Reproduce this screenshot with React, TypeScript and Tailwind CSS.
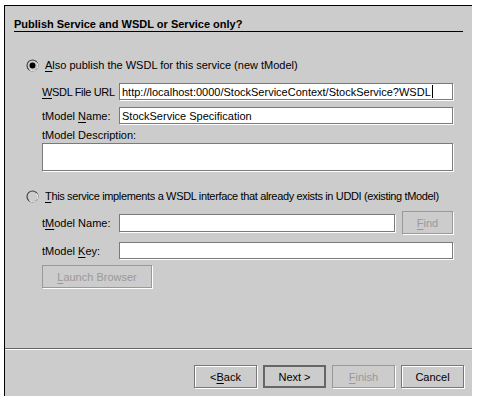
import React from "react";

// Swing/Metal style wizard page: publish a service with or without WSDL.

function Radio({ checked }: { checked?: boolean }) {
  return (
    <svg width="13" height="13" viewBox="0 0 13 13" className="shrink-0">
      <circle cx="6.5" cy="6.5" r="5.5" fill="#cccccc" stroke="#3c3c3c" strokeWidth="1.1" />
      <path d="M3.4 10.4 A4.5 4.5 0 0 0 10.4 3.4" fill="none" stroke="#ffffff" />
      {checked && <circle cx="6.5" cy="6.5" r="3" fill="#000000" />}
    </svg>
  );
}

function U({ children }: { children: React.ReactNode }) {
  return <span className="underline underline-offset-[2px]">{children}</span>;
}

function Field({ value, caret, className = "" }: { value?: string; caret?: boolean; className?: string }) {
  return (
    <div
      className={`h-[17px] bg-white border border-[#7a7a7a] shadow-[1px_1px_0_#ffffff] flex items-center pl-[2px] text-black whitespace-nowrap overflow-hidden ${className}`}
    >
      {value}
      {caret && <span className="inline-block w-px h-[13px] bg-black ml-px" />}
    </div>
  );
}

function Button({
  children,
  disabled,
  primary,
  className = "",
}: {
  children: React.ReactNode;
  disabled?: boolean;
  primary?: boolean;
  className?: string;
}) {
  const tone = disabled
    ? "border border-[#999999] text-[#999999] shadow-[1px_1px_0_#ffffff]"
    : primary
    ? "border-2 border-[#666666] text-black"
    : "border border-[#777777] text-black shadow-[inset_1px_1px_0_#ffffff,1px_1px_0_#ffffff]";
  return (
    <div className={`h-[23px] flex items-center justify-center bg-[#cccccc] whitespace-nowrap ${tone} ${className}`}>
      {children}
    </div>
  );
}

export default function App() {
  return (
    <div
      className="min-h-screen bg-white pt-[5px] pl-[4px] text-[11px] leading-[14px] text-black"
      style={{ fontFamily: '"Liberation Sans", Arial, sans-serif' }}
    >
      <div className="w-[468px] h-[391px] bg-[#cccccc] border-l border-t border-black flex flex-col">
        {/* Heading */}
        <div className="mx-[9px] mt-[11px] border-b border-black h-[15px]">
          <span className="font-bold">Publish Service and WSDL or Service only?</span>
        </div>

        {/* Option 1: new tModel */}
        <div className="flex items-center gap-[6px] pl-[21px] mt-[26px]">
          <Radio checked />
          <span className="whitespace-nowrap">
            <U>A</U>lso publish the WSDL for this service (new tModel)
          </span>
        </div>

        <div className="flex flex-col pl-[37px] pr-[19px]">
          <div className="flex items-center mt-[11px]">
            <span className="w-[77px] shrink-0 whitespace-nowrap tracking-[-0.35px]">
              <U>W</U>SDL File URL
            </span>
            <Field className="flex-1" value="http://localhost:0000/StockServiceContext/StockService?WSDL" caret />
          </div>
          <div className="flex items-center mt-[7px]">
            <span className="w-[77px] shrink-0 whitespace-nowrap">
              tModel <U>N</U>ame:
            </span>
            <Field className="flex-1" value="StockService Specification" />
          </div>
          <span className="mt-[4px] whitespace-nowrap">tModel Description:</span>
          <div className="h-[28px] bg-white border border-[#7a7a7a] shadow-[1px_1px_0_#ffffff] mt-px" />
        </div>

        {/* Option 2: existing tModel */}
        <div className="flex items-center gap-[6px] pl-[21px] mt-[18px]">
          <Radio />
          <span className="whitespace-nowrap tracking-[-0.35px]">
            <U>T</U>his service implements a WSDL interface that already exists in UDDI (existing tModel)
          </span>
        </div>

        <div className="flex flex-col pl-[37px] pr-[19px]">
          <div className="flex items-center mt-[8px]">
            <span className="w-[77px] shrink-0 whitespace-nowrap">
              t<U>M</U>odel Name:
            </span>
            <Field className="flex-1 h-[18px]" />
            <Button disabled className="w-[51px] ml-[7px] h-[22px]">
              <U>F</U>ind
            </Button>
          </div>
          <div className="flex items-center mt-[8px]">
            <span className="w-[77px] shrink-0 whitespace-nowrap">
              tModel <U>K</U>ey:
            </span>
            <Field className="flex-1" />
          </div>
          <Button disabled className="w-[110px] h-[22px] mt-[6px]">
            <U>L</U>aunch Browser
          </Button>
        </div>

        <div className="flex-1" />

        {/* Wizard navigation */}
        <div className="border-t border-[#666666] shadow-[inset_0_1px_0_#ffffff] h-[48px] flex justify-end items-start pt-[16px] pr-[8px] gap-[6px]">
          <Button className="w-[63px]">
            &lt; <U>B</U>ack
          </Button>
          <Button primary className="w-[63px]">
            Next &gt;
          </Button>
          <Button disabled className="w-[63px]">
            <U>F</U>inish
          </Button>
          <Button className="w-[63px]">Cancel</Button>
        </div>
      </div>
    </div>
  );
}
